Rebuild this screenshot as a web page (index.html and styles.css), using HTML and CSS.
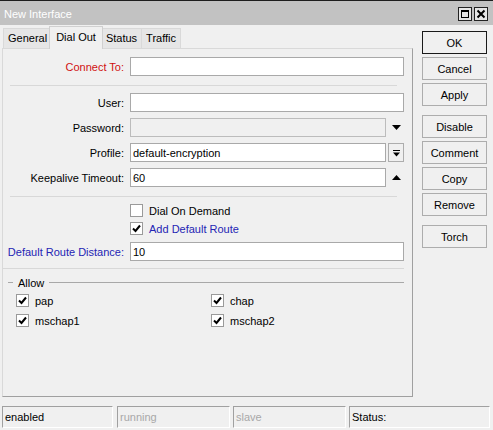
FILE: index.html
```html
<!DOCTYPE html>
<html lang="en">
<head>
    <meta charset="UTF-8">
    <meta name="viewport" content="width=device-width, initial-scale=1.0">
    <title>New Interface</title>
    <link rel="stylesheet" href="styles.css">
</head>
<body>
<div class="window">
    <!-- Title bar -->
    <div class="titlebar">
        <span class="title">New Interface</span>
        <div class="wbtns">
            <span class="wbtn"><span class="maxbox"></span></span>
            <span class="wbtn">
                <svg width="10" height="10" viewBox="0 0 10 10"><path d="M1.5 1.5 L8.5 8.5 M8.5 1.5 L1.5 8.5" stroke="#000" stroke-width="2"/></svg>
            </span>
        </div>
    </div>

    <div class="main">
        <div class="left">
            <div class="tabs">
                <div class="tab">General</div>
                <div class="tab active">Dial Out</div>
                <div class="tab">Status</div>
                <div class="tab">Traffic</div>
            </div>

            <div class="panel">
                <div class="row">
                    <label class="lbl red">Connect To:</label>
                    <input class="field" type="text" value="">
                </div>
                <div class="sep"></div>

                <div class="row">
                    <label class="lbl">User:</label>
                    <input class="field" type="text" value="">
                </div>
                <div class="row">
                    <label class="lbl">Password:</label>
                    <input class="field disabled" type="text" value="" disabled>
                    <span class="arrow">
                        <svg width="9" height="5" viewBox="0 0 9 5"><path d="M0 0 H9 L4.5 5 Z" fill="#000"/></svg>
                    </span>
                </div>
                <div class="row">
                    <label class="lbl">Profile:</label>
                    <input class="field" type="text" value="default-encryption">
                    <span class="arrow boxed">
                        <svg width="7" height="7" viewBox="0 0 7 7"><path d="M0 0 H7 V1 H0 Z M0 2.5 H7 L3.5 6.5 Z" fill="#000"/></svg>
                    </span>
                </div>
                <div class="row">
                    <label class="lbl">Keepalive Timeout:</label>
                    <input class="field" type="text" value="60">
                    <span class="arrow">
                        <svg width="9" height="5" viewBox="0 0 9 5"><path d="M0 5 H9 L4.5 0 Z" fill="#000"/></svg>
                    </span>
                </div>
                <div class="sep"></div>

                <div class="crow">
                    <span class="cbox"></span>
                    <span class="ctext">Dial On Demand</span>
                </div>
                <div class="crow">
                    <span class="cbox">
                        <svg width="11" height="11" viewBox="0 0 11 11"><path d="M2 5.5 L4.5 8 L9 2.5" stroke="#000" stroke-width="2" fill="none"/></svg>
                    </span>
                    <span class="ctext blue">Add Default Route</span>
                </div>
                <div class="row drd">
                    <label class="lbl blue">Default Route Distance:</label>
                    <input class="field" type="text" value="10">
                </div>
                <div class="sep sep3"></div>

                <div class="legend">
                    <span class="lline short"></span>
                    <span class="ltext">Allow</span>
                    <span class="lline"></span>
                </div>
                <div class="allow">
                    <div class="citem">
                        <span class="cbox"><svg width="11" height="11" viewBox="0 0 11 11"><path d="M2 5.5 L4.5 8 L9 2.5" stroke="#000" stroke-width="2" fill="none"/></svg></span>
                        <span class="ctext">pap</span>
                    </div>
                    <div class="citem">
                        <span class="cbox"><svg width="11" height="11" viewBox="0 0 11 11"><path d="M2 5.5 L4.5 8 L9 2.5" stroke="#000" stroke-width="2" fill="none"/></svg></span>
                        <span class="ctext">chap</span>
                    </div>
                    <div class="citem">
                        <span class="cbox"><svg width="11" height="11" viewBox="0 0 11 11"><path d="M2 5.5 L4.5 8 L9 2.5" stroke="#000" stroke-width="2" fill="none"/></svg></span>
                        <span class="ctext">mschap1</span>
                    </div>
                    <div class="citem">
                        <span class="cbox"><svg width="11" height="11" viewBox="0 0 11 11"><path d="M2 5.5 L4.5 8 L9 2.5" stroke="#000" stroke-width="2" fill="none"/></svg></span>
                        <span class="ctext">mschap2</span>
                    </div>
                </div>
            </div>
        </div>

        <!-- Buttons on the right -->
        <div class="buttons">
            <button class="btn default">OK</button>
            <button class="btn">Cancel</button>
            <button class="btn">Apply</button>
            <button class="btn group">Disable</button>
            <button class="btn">Comment</button>
            <button class="btn">Copy</button>
            <button class="btn">Remove</button>
            <button class="btn group">Torch</button>
        </div>
    </div>

    <div class="statusbar">
        <div class="seg s1">enabled</div>
        <div class="seg s2 dim">running</div>
        <div class="seg s3 dim">slave</div>
        <div class="seg s4">Status:</div>
    </div>
</div>
</body>
</html>
```

FILE: styles.css
```css
body {
    margin: 0;
    background-color: #f0f0f0;
    font-family: "Liberation Sans", Arial, sans-serif;
    font-size: 11px;
    color: #000;
}
.window {
    width: 493px;
    height: 430px;
    background-color: #f0f0f0;
    overflow: hidden;
}

/* Title bar */
.titlebar {
    height: 24px;
    border-top: 1px solid #1e1e1e;
    background-color: #c2c2c2;
    display: flex;
    align-items: center;
    justify-content: space-between;
}
.title {
    color: #fff;
    font-size: 11px;
    padding-left: 4px;
    padding-top: 2px;
}
.wbtns {
    display: flex;
    gap: 2px;
    margin-right: 5px;
    padding-top: 2px;
}
.wbtn {
    width: 12px;
    height: 12px;
    border: 1px solid #222;
    background-color: #e6e6e6;
    display: flex;
    align-items: center;
    justify-content: center;
}
.maxbox {
    width: 6px;
    height: 5px;
    border: 1px solid #000;
    border-top-width: 2px;
}

/* Main area */
.main {
    display: flex;
    padding-left: 2px;
}
.left {
    width: 411px;
}
.tabs {
    display: flex;
    align-items: flex-end;
    height: 23px;
    padding-left: 1px;
}
.tab {
    height: 19px;
    line-height: 19px;
    padding: 0 4px;
    border: 1px solid #d9d9d9;
    border-bottom: none;
    border-right: none;
    background-color: #e6e6e6;
}
.tab:last-child {
    border-right: 1px solid #d9d9d9;
}
.tab.active {
    height: 22px;
    line-height: 20px;
    padding: 0 6px;
    margin: 0 -1px -1px -2px;
    background-color: #f0f0f0;
    border: 1px solid #d0d0d0;
    border-bottom: none;
    position: relative;
    z-index: 1;
}
.tab.active + .tab {
    border-left: none;
}
.panel {
    height: 349px;
    box-sizing: border-box;
    border: 1px solid #d9d9d9;
    border-right-color: #a0a0a0;
    border-bottom-color: #a0a0a0;
    padding: 8px 8px 0 0;
    display: flex;
    flex-direction: column;
}

/* Form rows */
.row {
    display: flex;
    align-items: center;
    height: 19px;
    margin-bottom: 6px;
    flex-shrink: 0;
}
.lbl {
    width: 121px;
    text-align: right;
    margin-right: 6px;
    white-space: nowrap;
}
.red {
    color: #d01010;
}
.blue {
    color: #2424b4;
}
.field {
    flex: 1;
    min-width: 0;
    height: 19px;
    box-sizing: border-box;
    border: 1px solid #a9a9a9;
    background-color: #fff;
    font-family: "Liberation Sans", Arial, sans-serif;
    font-size: 11px;
    padding: 0 2px;
    margin: 0;
    outline: none;
}
.field.disabled {
    background-color: #f0f0f0;
    border-color: #bcbcbc;
}
.arrow {
    width: 16px;
    height: 19px;
    box-sizing: border-box;
    margin-left: 2px;
    display: flex;
    align-items: center;
    justify-content: center;
}
.arrow.boxed {
    border: 1px solid #adadad;
    padding-top: 1px;
}
.sep {
    border-top: 1px solid #d8d8d8;
    margin: 3px 7px 7px 7px;
}
.sep3 {
    margin: 1px 0 7px 0;
}

/* Checkbox rows */
.crow {
    display: flex;
    align-items: center;
    height: 13px;
    padding-left: 127px;
    margin-bottom: 5px;
}
.cbox {
    width: 13px;
    height: 13px;
    box-sizing: border-box;
    border: 1px solid #9a9a9a;
    background-color: #fff;
    display: flex;
    align-items: center;
    justify-content: center;
    flex-shrink: 0;
}
.ctext {
    margin-left: 6px;
}
.drd {
    margin-top: 2px;
}

/* Allow group */
.legend {
    display: flex;
    align-items: center;
    height: 13px;
    margin: 0 0 5px 5px;
}
.lline {
    flex: 1;
    border-top: 1px solid #a8a8a8;
}
.lline.short {
    flex: none;
    width: 5px;
}
.ltext {
    margin: 0 5px;
}
.allow {
    display: grid;
    grid-template-columns: 195px 1fr;
    row-gap: 7px;
    padding-left: 13px;
}
.citem {
    display: flex;
    align-items: center;
    height: 13px;
}

/* Right buttons */
.buttons {
    display: flex;
    flex-direction: column;
    width: 65px;
    margin-left: 9px;
    padding-top: 6px;
}
.btn {
    height: 23px;
    margin: 0 0 3px 0;
    padding: 0;
    border: 1px solid #adadad;
    background-color: #f0f0f0;
    font-family: "Liberation Sans", Arial, sans-serif;
    font-size: 11px;
    color: #000;
}
.btn.default {
    border: 1px solid #1a1a1a;
}
.btn.group {
    margin-top: 6px;
}

/* Status bar */
.statusbar {
    display: flex;
    margin-top: 9px;
    padding-left: 2px;
}
.seg {
    height: 22px;
    box-sizing: border-box;
    border: 1px solid #fff;
    border-top-color: #a0a0a0;
    border-left-color: #a0a0a0;
    line-height: 20px;
    padding-left: 2px;
}
.s1 { width: 111px; margin-right: 4px; }
.s2 { width: 113px; margin-right: 3px; }
.s3 { width: 113px; margin-right: 3px; }
.s4 { width: 141px; }
.dim {
    color: #a8a8a8;
}
```
